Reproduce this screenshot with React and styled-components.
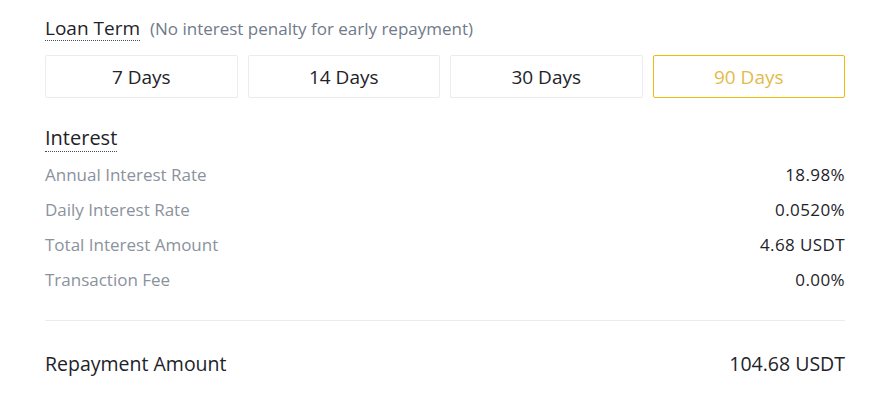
import styled, { createGlobalStyle } from 'styled-components';

const GlobalStyle = createGlobalStyle`
  body {
    margin: 0;
    background: #fff;
    font-family: 'Open Sans', 'Noto Sans', Arial, sans-serif;
    color: #1e2329;
  }
`;

const Wrapper = styled.div`
  width: 800px;
  padding: 16px 48px 0 45px;
`;

const TermHeader = styled.div`
  display: flex;
  align-items: baseline;
  gap: 10px;
`;

const Dotted = styled.span`
  font-size: ${({ size }) => size || 19}px;
  font-weight: 500;
  color: #1e2329;
  border-bottom: 1px dotted #474d57;
  line-height: 24px;
`;

const Hint = styled.span`
  font-size: 17px;
  color: #707a8a;
`;

const TermList = styled.div`
  display: grid;
  grid-template-columns: repeat(4, 1fr);
  gap: 10px;
  margin-top: 14px;
`;

const TermButton = styled.button`
  height: 43px;
  background: #fff;
  border: 1px solid ${({ active }) => (active ? '#f0b90b' : '#eaecef')};
  border-radius: 2px;
  font-family: inherit;
  font-size: 19px;
  color: ${({ active }) => (active ? '#e3bb4a' : '#1e2329')};
  cursor: pointer;
`;

const Section = styled.div`
  margin-top: 28px;
`;

const Rows = styled.div`
  display: flex;
  flex-direction: column;
  margin-top: 7px;
`;

const Row = styled.div`
  display: flex;
  justify-content: space-between;
  align-items: center;
  height: 35px;
  font-size: 17px;
`;

const Label = styled.span`
  color: #8b929d;
`;

const Value = styled.span`
  color: #1e2329;
  letter-spacing: 0.4px;
`;

const Divider = styled.div`
  height: 1px;
  background: #eaecef;
  margin-top: 23px;
`;

const Total = styled.div`
  display: flex;
  justify-content: space-between;
  align-items: center;
  margin-top: 27px;
  height: 30px;
  font-size: 19.5px;
  font-weight: 500;
`;

const terms = ['7 Days', '14 Days', '30 Days', '90 Days'];

const rows = [
  ['Annual Interest Rate', '18.98%'],
  ['Daily Interest Rate', '0.0520%'],
  ['Total Interest Amount', '4.68 USDT'],
  ['Transaction Fee', '0.00%'],
];

const App = () => (
  <>
    <GlobalStyle />
    <Wrapper>
      <TermHeader>
        <Dotted>Loan Term</Dotted>
        <Hint>(No interest penalty for early repayment)</Hint>
      </TermHeader>
      <TermList>
        {terms.map((t) => (
          <TermButton key={t} active={t === '90 Days'}>
            {t}
          </TermButton>
        ))}
      </TermList>
      <Section>
        <Dotted size={20}>Interest</Dotted>
        <Rows>
          {rows.map(([label, value]) => (
            <Row key={label}>
              <Label>{label}</Label>
              <Value>{value}</Value>
            </Row>
          ))}
        </Rows>
      </Section>
      <Divider />
      <Total>
        <span>Repayment Amount</span>
        <span>104.68 USDT</span>
      </Total>
    </Wrapper>
  </>
);

export default App;
